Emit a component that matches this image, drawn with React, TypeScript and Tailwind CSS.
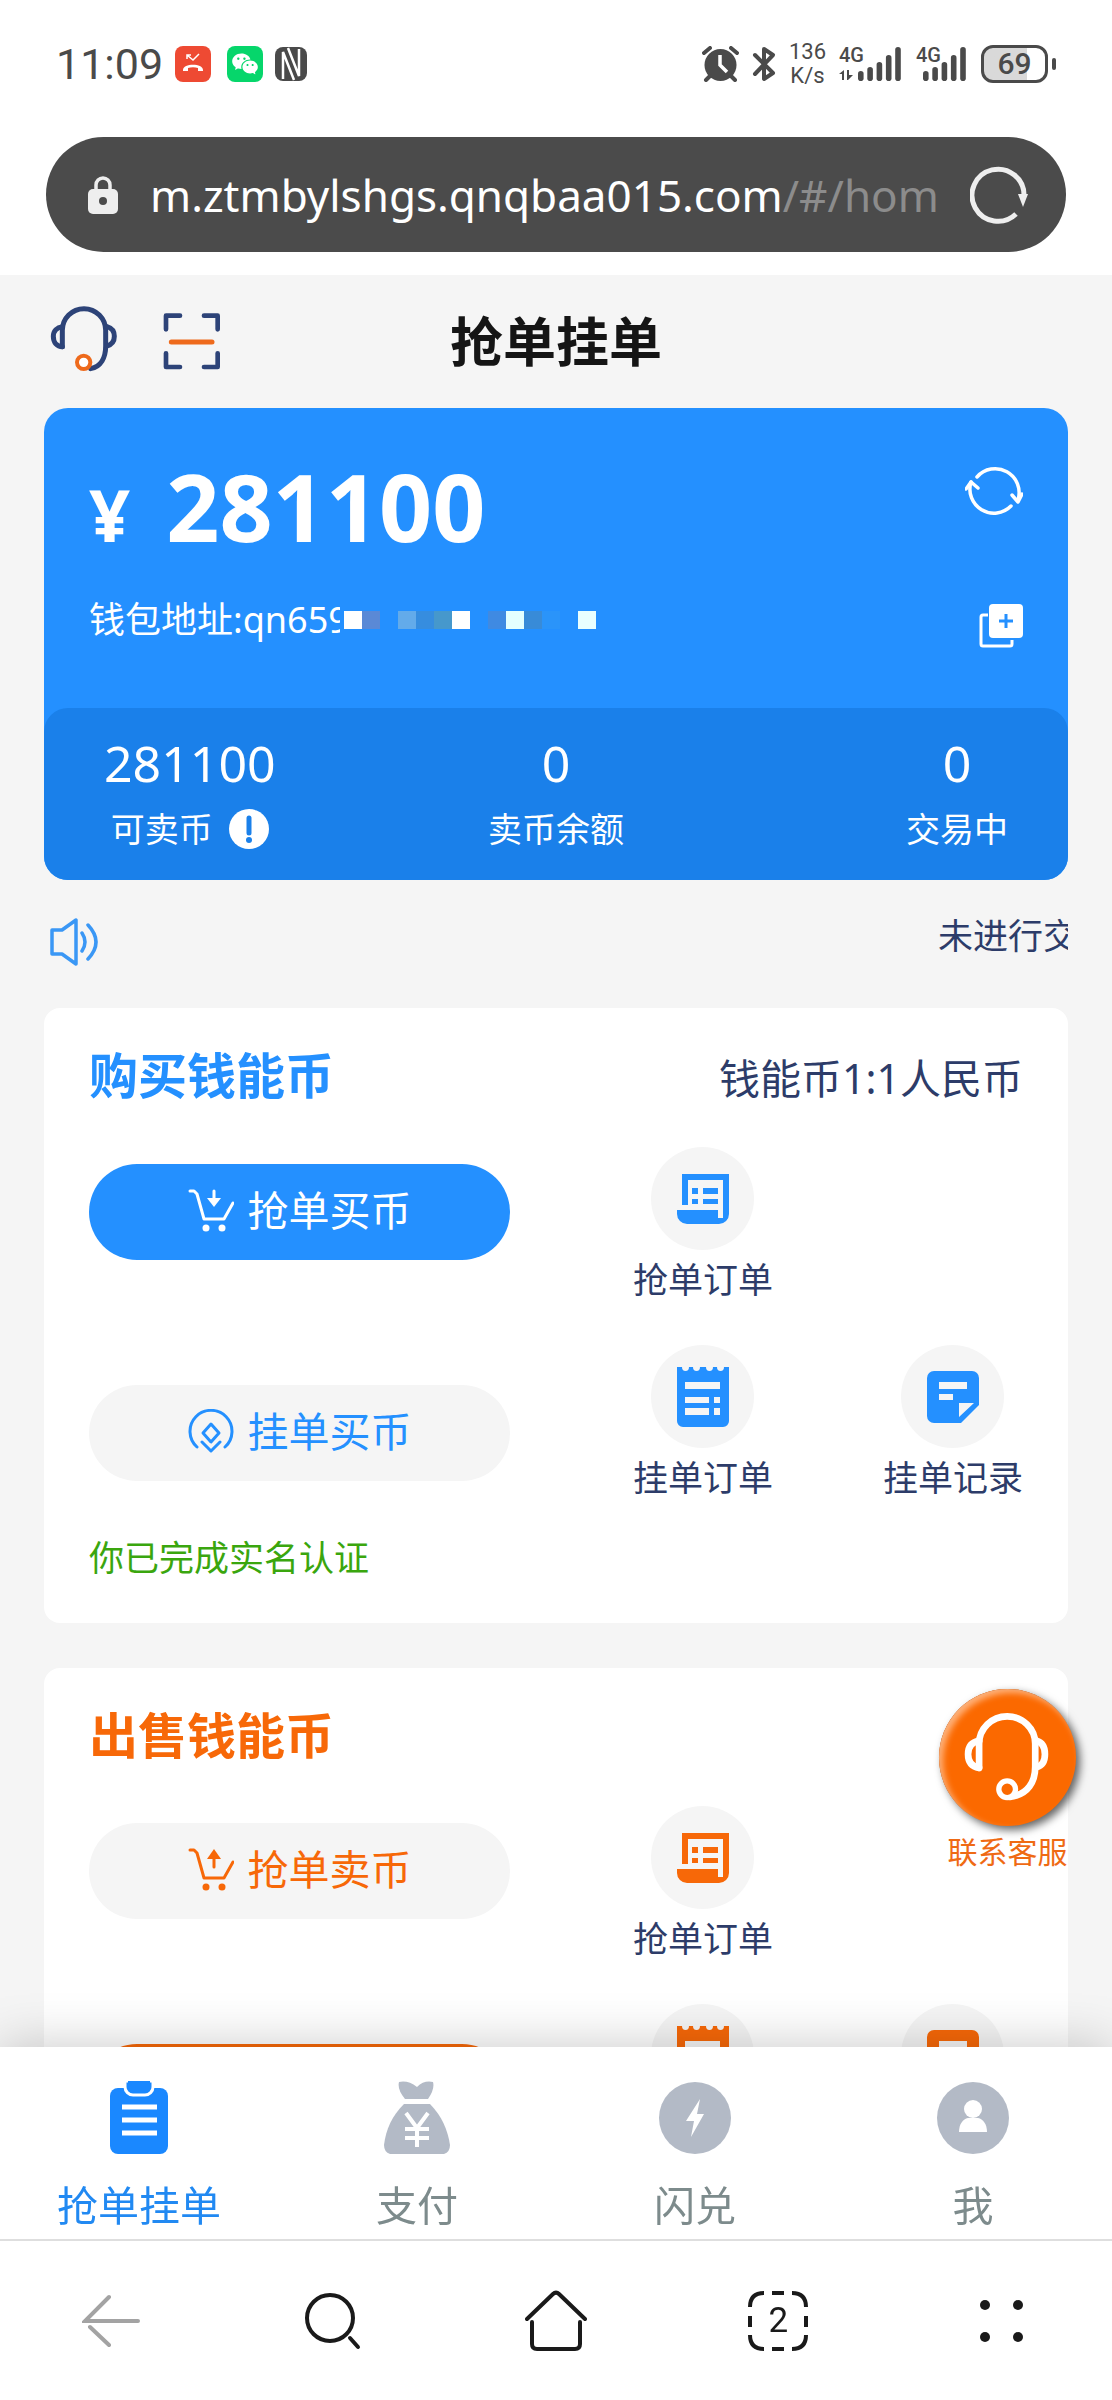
import type { ReactNode } from "react";
import { RiWechatFill } from "react-icons/ri";

const FONT = "font-['Noto_Sans','Noto_Sans_CJK_SC',sans-serif]";

/* ---------- status bar ---------- */

function Signal({ data }: { data?: boolean }) {
  const x = data ? 19 : 7;
  const bars = [10, 14, 19, 26, 34];
  return (
    <svg width={data ? 64 : 52} height="38" className="shrink-0 overflow-visible fill-[#4a4a4a]" aria-hidden="true">
      {bars.map((h, i) => (
        <rect key={h} x={x + i * 9.3} y={36 - h} width="5.6" height={h} rx="2.8" />
      ))}
      <text x="0" y="17" fontSize="20" className="font-['Roboto',sans-serif] font-medium">
        4G
      </text>
      {data && <path d="M0 29 L5 25 V35 H3 V29Z M8 25 H10 V30 H14 L9 35 H8Z" />}
    </svg>
  );
}

function StatusBar() {
  return (
    <div className="flex items-center justify-between px-14 pt-9 pb-7 text-[#4a4a4a]">
      <div className="flex items-center gap-3">
        <span className="font-['Roboto',sans-serif] text-[43px] leading-[56px]">11:09</span>
        <span className="flex size-9 items-center justify-center rounded-lg bg-[#ee4a33]">
          <svg width="24" height="24" viewBox="0 0 24 24" fill="none" stroke="#fff" strokeWidth="1.5">
            <path d="M6 3 L12 8 L18 2 M6 7 V3 H10" />
            <path d="M2 18 C2 11 22 11 22 18 V19 H17 V16 C14 15 10 15 7 16 V19 H2Z" fill="#fff" stroke="none" />
          </svg>
        </span>
        <span className="ml-1 flex size-9 items-center justify-center rounded-lg bg-[#06d66b] text-white">
          <RiWechatFill size={28} />
        </span>
        <svg width="32" height="34" viewBox="0 0 32 34" aria-hidden="true">
          <rect width="32" height="34" rx="8" fill="#4a4a4a" />
          <path d="M8 32 V5 L19 33 M13 1 L24 29 V2" fill="none" stroke="#fff" strokeWidth="2.500" />
        </svg>
      </div>

      <div className="flex items-center gap-[13px]">
        <svg width="37" height="36" viewBox="0 0 37 36" aria-hidden="true">
          <circle cx="18.500" cy="19" r="16" fill="#4a4a4a" />
          <path d="M2 7 L8 2 M29 2 L35 7 M8 30 L4 34 M29 30 L33 34" stroke="#4a4a4a" strokeWidth="4" strokeLinecap="round" />
          <path d="M18 9 V19 L25 26" fill="none" stroke="#fff" strokeWidth="3.500" />
        </svg>
        <svg width="24" height="36" viewBox="0 0 24 36" fill="none" stroke="#4a4a4a" strokeWidth="4" strokeLinejoin="round" strokeLinecap="round" aria-hidden="true">
          <path d="M3 9 L21 27 L12 33 V3 L21 9 L3 28" />
        </svg>
        <span className="flex flex-col text-center font-['Roboto',sans-serif] text-[22px] leading-6">
          <span>136</span>
          <span>K/s</span>
        </span>
        <Signal data />
        <Signal />
        <span className="flex items-center gap-1">
          <span className="flex h-[38px] w-[67px] items-center justify-center rounded-xl border-[3px] border-[#4a4a4a] bg-linear-to-r from-[#d9d9d9] from-70% to-white to-70% font-['Roboto',sans-serif] text-[30px] leading-none font-medium">
            69
          </span>
          <span className="h-3 w-1 rounded-sm bg-[#4a4a4a]" />
        </span>
      </div>
    </div>
  );
}

function AddressBar() {
  return (
    <div className="px-[46px] pt-[17px] pb-[23px]">
      <div className="flex h-[115px] items-center rounded-full bg-[#4b4b4b] pr-[38px] pl-[42px]">
        <svg width="30" height="40" viewBox="0 0 30 40" className="shrink-0" aria-hidden="true">
          <path d="M8 16 V10 a7 7 0 0 1 14 0 V16" fill="none" stroke="#eee" strokeWidth="3.500" />
          <rect y="14" width="30" height="25" rx="5" fill="#eee" />
          <circle cx="15" cy="26" r="4" fill="#4b4b4b" />
        </svg>
        <p className="ml-8 min-w-0 flex-1 overflow-hidden text-[44px] leading-[60px] whitespace-nowrap text-white">
          m.ztmbylshgs.qnqbaa015.com<span className="text-[#8c8c8c]">/#/hom</span>
        </p>
        <button type="button" aria-label="刷新" className="ml-8 shrink-0">
          <svg width="58" height="58" viewBox="0 0 58 58" fill="none" stroke="#eee" strokeWidth="5">
            <path d="M46 48 A26 26 0 1 1 54 30" />
            <path d="M48 28 H58 L53 41Z" fill="#eee" stroke="none" />
          </svg>
        </button>
      </div>
    </div>
  );
}

/* ---------- page icons ---------- */

function Headset() {
  return (
    <svg width="70" height="68" viewBox="30 40 210 204" fill="none" stroke="#2d4378" strokeWidth="15" strokeLinecap="round">
      <path d="M70 168 V119 A65 65 0 0 1 200 119 V166 C200 200 186 228 155 234" />
      <path d="M70 108 C54 110 43 120 43 137 C43 156 54 168 70 168" />
      <path d="M204 108 C218 112 226 122 226 137 C226 152 218 162 204 166" />
      <circle cx="134" cy="215" r="20" stroke="#ee6a1c" strokeWidth="12" fill="#fff" />
    </svg>
  );
}

function Scan() {
  return (
    <svg width="60" height="60" viewBox="366 64 180 180" fill="none" stroke="#2d4378" strokeWidth="14" strokeLinecap="round" strokeLinejoin="round">
      <path d="M378 116 V75 H420 M492 75 H533 V116 M378 188 V229 H420 M492 229 H533 V188" />
      <path d="M394 154 H516" stroke="#ee6a1c" strokeWidth="15" />
    </svg>
  );
}

function Cart({ up }: { up?: boolean }) {
  return (
    <svg width="46" height="44" viewBox="0 0 46 44" fill="none" stroke="currentColor" strokeWidth="3" strokeLinejoin="round" strokeLinecap="round" aria-hidden="true">
      <path d="M2 3 H6 L9 6 L16 31 H36 L45 15" />
      {up ? <path d="M26 10 V20" /> : <path d="M26 3 V12" />}
      {up ? (
        <path d="M19 12 L26 2 L33 12Z" fill="currentColor" stroke="none" />
      ) : (
        <path d="M19 10 L26 19 L33 10Z" fill="currentColor" stroke="none" />
      )}
      <circle cx="18" cy="40" r="3.500" fill="currentColor" stroke="none" />
      <circle cx="34" cy="40" r="3.500" fill="currentColor" stroke="none" />
    </svg>
  );
}

function Coin() {
  return (
    <svg width="46" height="44" viewBox="0 0 46 44" fill="none" stroke="currentColor" strokeWidth="3" strokeLinejoin="round" strokeLinecap="round" aria-hidden="true">
      <path d="M9 38 A21 21 0 1 1 37 38" />
      <path d="M23 15 L31 24 L23 33 L15 24Z" />
      <path d="M14 33 L23 42 L32 33" />
    </svg>
  );
}

function OrderIcon() {
  return (
    <svg width="52" height="50" viewBox="0 0 52 50" fill="currentColor" aria-hidden="true">
      <path d="M5 0 H52 V40 a10 10 0 0 1-10 10 H10 a10 10 0 0 1-10-10 V36 H41 V44 h5 V6 H11 V31 H5Z" />
      <path d="M15 14h6v6h-6z M26 14h15v6h-15z M15 25h6v5h-6z M26 25h15v5h-15z" />
    </svg>
  );
}

function ReceiptIcon() {
  return (
    <svg width="52" height="60" viewBox="0 0 52 60" aria-hidden="true">
      <path
        d="M0 0 H5 a3.500 4 0 0 0 7 0 H16 a3.500 4 0 0 0 7 0 H29 a3.500 4 0 0 0 7 0 H40 a3.500 4 0 0 0 7 0 H52 V54 a6 6 0 0 1-6 6 H6 a6 6 0 0 1-6-6Z"
        fill="currentColor"
      />
      <path d="M8 15h35v7H8z M8 30h24v6H8z M37 30h6v6h-6z M8 41h24v7H8z M37 41h6v7h-6z" fill="#f5f5f5" />
    </svg>
  );
}

function NoteIcon() {
  return (
    <svg width="52" height="52" viewBox="0 0 52 52" aria-hidden="true">
      <path d="M7 0 H45 a7 7 0 0 1 7 7 V34 L34 52 H7 a7 7 0 0 1-7-7 V7 a7 7 0 0 1 7-7Z" fill="currentColor" />
      <path d="M12 11h28v7H12z M12 23h14v6H12z M32 46 V32 H47Z" fill="#f5f5f5" />
    </svg>
  );
}

/* ---------- wallet ---------- */

const MOSAIC = [
  "bg-white",
  "bg-[#5a89d6]",
  "bg-[#2490ff]",
  "bg-[#63abea]",
  "bg-[#368ddf]",
  "bg-[#4698cc]",
  "bg-white",
  "bg-[#2490ff]",
  "bg-[#3f8ae2]",
  "bg-[#e4ffff]",
  "bg-[#388bd8]",
  "bg-[#2a94fa]",
  "bg-[#2490ff]",
  "bg-[#e9ffff]",
];

function Stat({ value, label, children }: { value: string; label: string; children?: ReactNode }) {
  return (
    <div className="flex flex-col items-center gap-4">
      <span className="text-[50px] leading-[60px]">{value}</span>
      <span className="flex items-center gap-4 text-[34px] leading-10">
        {label}
        {children}
      </span>
    </div>
  );
}

function Wallet() {
  return (
    <section className="rounded-3xl bg-[#2490ff] text-white">
      <div className="px-[45px] pt-12 pb-[60px]">
        <div className="flex items-start justify-between">
          <p className="flex items-baseline gap-9 text-[93px] leading-[100px] font-bold">
            <span className="text-[72px] leading-none">¥</span>
            281100
          </p>
          <button type="button" aria-label="刷新余额" className="mt-2">
            <svg width="58" height="56" viewBox="0 0 58 56" fill="none" stroke="#fff" strokeWidth="3.500" strokeLinecap="round" strokeLinejoin="round">
              <path d="M12 13 A24 24 0 0 1 53 36 M46 42 A24 24 0 0 1 6 18" />
              <path d="M47 31 L53 38 L57 30 M1 25 L6 18 L13 24" />
            </svg>
          </button>
        </div>
        <div className="mt-10 flex items-start justify-between">
          <p className="flex items-center text-[36px] leading-[48px]">
            钱包地址:qn65
            <span className="w-3 overflow-hidden">9</span>
            <span className="ml-1 flex" aria-hidden="true">
              {MOSAIC.map((c, i) => (
                <span key={i} className={`h-[18px] w-[18px] ${c}`} />
              ))}
            </span>
          </p>
          <button type="button" aria-label="复制" className="mt-2">
            <svg width="44" height="44" viewBox="0 0 44 44">
              <path d="M9 11 H4 a2 2 0 0 0-2 2 V40 a2 2 0 0 0 2 2 H31 a2 2 0 0 0 2-2 V36" fill="none" stroke="#fff" strokeWidth="3" />
              <rect x="10" width="34" height="34" rx="4" fill="#fff" />
              <path d="M27 10 V24 M20 17 H34" stroke="#2490ff" strokeWidth="3" />
            </svg>
          </button>
        </div>
      </div>
      <div className="grid grid-cols-[1fr_auto_1fr] items-start rounded-3xl bg-[#1a80ea] px-[60px] pt-[25px] pb-[31px]">
        <div className="justify-self-start">
          <Stat value="281100" label="可卖币">
            <svg width="40" height="40" viewBox="0 0 40 40" aria-hidden="true">
              <circle cx="20" cy="20" r="20" fill="#fff" />
              <path d="M20 9 V24" stroke="#1a80ea" strokeWidth="5" strokeLinecap="round" />
              <circle cx="20" cy="31" r="3" fill="#1a80ea" />
            </svg>
          </Stat>
        </div>
        <Stat value="0" label="卖币余额" />
        <div className="justify-self-end">
          <Stat value="0" label="交易中" />
        </div>
      </div>
    </section>
  );
}

function Notice() {
  return (
    <div className="flex items-start justify-between pt-[38px] pb-[42px]">
      <svg width="58" height="48" viewBox="0 0 58 48" fill="none" stroke="#3a97f5" strokeWidth="3.500" strokeLinejoin="round" strokeLinecap="round" aria-hidden="true">
        <path d="M8 12 H18 L32 2 V46 L18 36 H8Z" />
        <path d="M38 15 Q44 24 38 33 M44 7 Q60 24 44 41" />
      </svg>
      <p className="w-[130px] overflow-hidden text-[35px] leading-9 whitespace-nowrap text-[#2d3c69]">未进行交</p>
    </div>
  );
}

/* ---------- trade cards ---------- */

function Entry({ icon, label }: { icon: ReactNode; label: string }) {
  return (
    <a href="#" className="flex flex-col items-center gap-[10px]">
      <span className="flex size-[103px] items-center justify-center rounded-full bg-[#f5f5f5]">{icon}</span>
      <span className="text-[35px] leading-10 text-[#2d3c69]">{label}</span>
    </a>
  );
}

type TradeProps = {
  title: string;
  rate?: string;
  color: string;
  solid: string;
  first: ReactNode;
  second: ReactNode;
  primary: "first" | "second";
  note?: string;
};

function Trade({ title, rate, color, solid, first, second, primary, note }: TradeProps) {
  const base = "flex h-24 w-[421px] items-center justify-center gap-[14px] rounded-full pb-1 text-[41px] leading-[56px]";
  const plain = `bg-[#f5f5f5] ${color}`;
  return (
    <section className="rounded-2xl bg-white px-[45px] pt-[37px] pb-[45px]">
      <div className="flex items-baseline justify-between">
        <h2 className={`text-[49px] leading-[60px] font-bold ${color}`}>{title}</h2>
        {rate && <p className="text-[41px] leading-[56px] text-[#2d3c69]">{rate}</p>}
      </div>
      <div className="mt-[41px] flex items-start justify-between">
        <div className="flex flex-col gap-[125px] pt-[17px]">
          <button type="button" className={`${base} ${primary === "first" ? solid : plain}`}>
            {first}
          </button>
          <button type="button" className={`${base} ${primary === "second" ? solid : plain}`}>
            {second}
          </button>
        </div>
        <div className={`grid grid-cols-2 gap-x-[110px] gap-y-[45px] ${color}`}>
          <Entry icon={<OrderIcon />} label="抢单订单" />
          <span />
          <Entry icon={<ReceiptIcon />} label="挂单订单" />
          <Entry icon={<NoteIcon />} label="挂单记录" />
        </div>
      </div>
      {note && <p className="mt-10 text-[35px] leading-10 text-[#3aa60e]">{note}</p>}
    </section>
  );
}

function Support() {
  return (
    <button type="button" className="absolute top-[1414px] right-9 flex flex-col items-center gap-2">
      <span className="rounded-full bg-[#fb6900] shadow-[inset_4px_4px_6px_#ffb27a,inset_1px_1px_1px_#b35a20,4px_4px_8px_rgba(0,0,0,0.6)]">
        <svg width="137" height="137" viewBox="58 58 410 410" fill="none" stroke="#fff" strokeWidth="20" strokeLinecap="round" aria-hidden="true">
          <path d="M178 294 V222 A84 82 0 0 1 346 222 V290 C346 335 325 375 270 381" />
          <path d="M178 213 C155 217 145 232 145 253 C145 277 155 290 178 294" />
          <path d="M350 213 C368 218 375 232 375 253 C375 273 368 287 350 292" />
          <circle cx="262" cy="358" r="25" fill="#fb6900" strokeWidth="16" />
        </svg>
      </span>
      <span className="text-[30px] leading-9 text-[#ef6a14]">联系客服</span>
    </button>
  );
}

/* ---------- bottom bars ---------- */

const TABS = [
  {
    label: "抢单挂单",
    icon: (
      <svg width="72" height="73" viewBox="0 0 72 73" aria-hidden="true">
        <rect x="7" y="7" width="58" height="66" rx="8" fill="#1a88ff" />
        <path d="M22 0 H50 V6 a8 8 0 0 1-8 8 H30 a8 8 0 0 1-8-8Z" fill="#1a88ff" stroke="#fff" strokeWidth="3" />
        <path d="M25 0 H47 V8 H25Z" fill="#1a88ff" />
        <path d="M19 26 H54 M19 39 H54 M19 52 H54" stroke="#fff" strokeWidth="5" />
      </svg>
    ),
  },
  {
    label: "支付",
    icon: (
      <svg width="66" height="73" viewBox="0 0 66 73" aria-hidden="true">
        <path d="M15 1 Q24 -1 33 6 Q40 -1 49 1 Q51 8 44 18 H21 Q13 8 15 1Z" fill="#b3bac6" />
        <path d="M20 23 H46 C58 35 64 50 66 64 Q66 71 60 73 H6 Q0 71 0 64 C2 48 8 35 20 23Z" fill="#b3bac6" />
        <path d="M22 32 L33 47 L44 32 M33 47 V66 M21 48 H45 M21 57 H45" fill="none" stroke="#fff" strokeWidth="4" />
      </svg>
    ),
  },
  {
    label: "闪兑",
    icon: (
      <svg width="72" height="73" viewBox="0 0 72 73" aria-hidden="true">
        <circle cx="36" cy="37" r="36" fill="#b3bac6" />
        <path d="M41 18 L27 40 H35 L32 56 L45 33 H38Z" fill="#fff" />
      </svg>
    ),
  },
  {
    label: "我",
    icon: (
      <svg width="72" height="73" viewBox="0 0 72 73" aria-hidden="true">
        <circle cx="36" cy="37" r="36" fill="#b3bac6" />
        <circle cx="36" cy="28" r="9" fill="#fff" />
        <path d="M22 51 C22 43 26 38 31 37 H41 C46 38 50 43 50 51Z" fill="#fff" />
      </svg>
    ),
  },
];

function TabBar() {
  return (
    <nav className="relative z-10 grid grid-cols-4 bg-white pt-[34px] pb-[10px] shadow-[0_0_50px_rgba(0,0,0,0.22)]">
      {TABS.map((tab, i) => (
        <a key={tab.label} href="#" className="flex flex-col items-center gap-[27px]">
          {tab.icon}
          <span className={`text-[41px] leading-[48px] ${i === 0 ? "text-[#2189f2]" : "text-[#7d8b8c]"}`}>{tab.label}</span>
        </a>
      ))}
    </nav>
  );
}

function BrowserBar() {
  return (
    <nav className="relative z-10 grid h-[161px] grid-cols-5 place-items-center border-t-2 border-[#dedede] bg-white text-[#1a1a1a]">
      <button type="button" aria-label="后退" className="text-[#a3a3a3]">
        <svg width="58" height="54" viewBox="0 0 58 54" fill="none" stroke="currentColor" strokeWidth="4" strokeLinecap="round">
          <path d="M27 3 L3 27 H56 M8 33 L27 51" />
        </svg>
      </button>
      <button type="button" aria-label="搜索">
        <svg width="60" height="60" viewBox="0 0 60 60" fill="none" stroke="currentColor" strokeWidth="4" strokeLinecap="round">
          <circle cx="26" cy="27" r="23" />
          <path d="M46 47 L54 56" />
        </svg>
      </button>
      <button type="button" aria-label="主页">
        <svg width="62" height="62" viewBox="0 0 62 62" fill="none" stroke="currentColor" strokeWidth="4" strokeLinecap="round" strokeLinejoin="round">
          <path d="M2 29 L28 4 Q31 1 34 4 L60 29" />
          <path d="M7 32 V54 Q7 59 12 59 H50 Q55 59 55 54 V32" />
        </svg>
      </button>
      <button type="button" aria-label="标签页" className="grid place-items-center *:col-start-1 *:row-start-1">
        <svg width="60" height="60" viewBox="0 0 60 60" fill="none" stroke="currentColor" strokeWidth="4">
          <path d="M2 16 Q2 2 16 2 M24 2 H36 M44 2 Q58 2 58 16 M58 25 V36 M58 44 Q58 58 44 58 M36 58 H24 M16 58 Q2 58 2 44 M2 36 V25" />
        </svg>
        <span className="font-['Roboto',sans-serif] text-[35px] leading-none">2</span>
      </button>
      <button type="button" aria-label="菜单">
        <svg width="46" height="44" viewBox="0 0 46 44" fill="currentColor">
          <circle cx="7" cy="6" r="5" />
          <circle cx="40" cy="6" r="5" />
          <circle cx="7" cy="38" r="5" />
          <circle cx="40" cy="38" r="5" />
        </svg>
      </button>
    </nav>
  );
}

export default function App() {
  return (
    <div className={`flex h-screen flex-col bg-white ${FONT}`}>
      <StatusBar />
      <AddressBar />
      <main className="relative min-h-0 flex-1 overflow-y-auto bg-[#f5f5f5] px-11 [scrollbar-width:none]">
        <header className="grid h-[133px] grid-cols-[1fr_auto_1fr] items-center">
          <div className="flex items-center gap-[43px] pl-[5px]">
            <button type="button" aria-label="客服" className="pb-2">
              <Headset />
            </button>
            <button type="button" aria-label="扫一扫">
              <Scan />
            </button>
          </div>
          <h1 className="text-[53px] leading-[64px] font-bold text-[#151515]">抢单挂单</h1>
        </header>
        <Wallet />
        <Notice />
        <div className="flex flex-col gap-[45px]">
          <Trade
            title="购买钱能币"
            rate="钱能币1:1人民币"
            color="text-[#2490ff]"
            solid="bg-[#2490ff] text-white"
            primary="first"
            first={
              <>
                <Cart />
                抢单买币
              </>
            }
            second={
              <>
                <Coin />
                挂单买币
              </>
            }
            note="你已完成实名认证"
          />
          <Trade
            title="出售钱能币"
            color="text-[#f76808]"
            solid="bg-[#f76808] text-white"
            primary="second"
            first={
              <>
                <Cart up />
                抢单卖币
              </>
            }
            second={
              <>
                <Coin />
                挂单卖币
              </>
            }
          />
        </div>
        <Support />
      </main>
      <TabBar />
      <BrowserBar />
    </div>
  );
}
